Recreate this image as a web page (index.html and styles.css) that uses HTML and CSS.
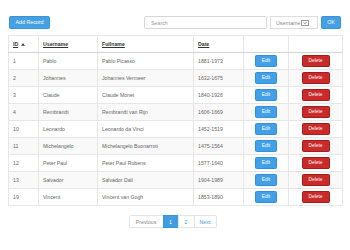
FILE: index.html
```html
<!DOCTYPE html>
<html>
<head>
<meta charset="utf-8">
<link rel="stylesheet" href="styles.css">
</head>
<body>
<div class="page">
  <div class="toolbar">
    <button class="btn btn-blue add">Add Record</button>
    <div class="tools">
      <input class="search" type="text" placeholder="Search">
      <div class="select"><span>Username</span><span class="caret-box"><svg viewBox="0 0 8 6" width="6" height="4"><path d="M1.5 1.5 L4 4 L6.5 1.5" fill="none" stroke="#555" stroke-width="1"/></svg></span></div>
      <button class="btn btn-blue ok">OK</button>
    </div>
  </div>
  <table class="grid">
    <colgroup>
      <col class="c1"><col class="c2"><col class="c3"><col class="c4"><col class="c5"><col class="c6">
    </colgroup>
    <thead>
      <tr>
        <th><a>ID</a> <svg class="sort" viewBox="0 0 6 4" width="4" height="3"><path d="M0 4 L3 0 L6 4 Z" fill="#333"/></svg></th>
        <th><a>Username</a></th>
        <th><a>Fullname</a></th>
        <th><a>Date</a></th>
        <th></th>
        <th></th>
      </tr>
    </thead>
    <tbody>
      <tr><td>1</td><td>Pablo</td><td>Pablo Picasso</td><td>1881-1973</td><td class="act"><button class="btn btn-edit">Edit</button></td><td class="act"><button class="btn btn-del">Delete</button></td></tr>
      <tr><td>2</td><td>Johannes</td><td>Johannes Vermeer</td><td>1632-1675</td><td class="act"><button class="btn btn-edit">Edit</button></td><td class="act"><button class="btn btn-del">Delete</button></td></tr>
      <tr><td>3</td><td>Claude</td><td>Claude Monet</td><td>1840-1926</td><td class="act"><button class="btn btn-edit">Edit</button></td><td class="act"><button class="btn btn-del">Delete</button></td></tr>
      <tr><td>4</td><td>Rembrandt</td><td>Rembrandt van Rijn</td><td>1606-1669</td><td class="act"><button class="btn btn-edit">Edit</button></td><td class="act"><button class="btn btn-del">Delete</button></td></tr>
      <tr><td>10</td><td>Leonardo</td><td>Leonardo da Vinci</td><td>1452-1519</td><td class="act"><button class="btn btn-edit">Edit</button></td><td class="act"><button class="btn btn-del">Delete</button></td></tr>
      <tr><td>11</td><td>Michelangelo</td><td>Michelangelo Buonarroti</td><td>1475-1564</td><td class="act"><button class="btn btn-edit">Edit</button></td><td class="act"><button class="btn btn-del">Delete</button></td></tr>
      <tr><td>12</td><td>Peter Paul</td><td>Peter Paul Rubens</td><td>1577-1640</td><td class="act"><button class="btn btn-edit">Edit</button></td><td class="act"><button class="btn btn-del">Delete</button></td></tr>
      <tr><td>13</td><td>Salvador</td><td>Salvador Dalí</td><td>1904-1989</td><td class="act"><button class="btn btn-edit">Edit</button></td><td class="act"><button class="btn btn-del">Delete</button></td></tr>
      <tr><td>19</td><td>Vincent</td><td>Vincent van Gogh</td><td>1853-1890</td><td class="act"><button class="btn btn-edit">Edit</button></td><td class="act"><button class="btn btn-del">Delete</button></td></tr>
    </tbody>
  </table>
  <nav class="pager">
    <span class="pg prev disabled">Previous</span>
    <span class="pg num active">1</span>
    <span class="pg num two">2</span>
    <span class="pg next">Next</span>
  </nav>
</div>
</body>
</html>
```
FILE: styles.css
```css
html, body {
  margin: 0;
  padding: 0;
  background: #fff;
}
body {
  font-family: "Liberation Sans", Arial, sans-serif;
  color: #555;
}
.page {
  padding: 16px 8px 0 8px;
}
.toolbar {
  display: flex;
  justify-content: space-between;
  align-items: center;
  height: 13px;
  margin-bottom: 6px;
}
.tools {
  display: flex;
  align-items: center;
  gap: 3px;
  margin-right: 1px;
}
.btn {
  font-family: "Liberation Sans", Arial, sans-serif;
  border: 1px solid transparent;
  border-radius: 1.5px;
  color: #fff;
  padding: 0;
  margin: 0;
  box-sizing: border-box;
  display: inline-flex;
  align-items: center;
  justify-content: center;
  line-height: 1;
}
.btn-blue {
  background: #45a1e3;
  border-color: #3a93d6;
  font-size: 5.3px;
  height: 13px;
}
.add {
  width: 41px;
  margin-left: 1px;
}
.ok {
  width: 20px;
}
.search {
  box-sizing: border-box;
  width: 123px;
  height: 13px;
  border: 1px solid #d6d6d6;
  border-radius: 1.5px;
  padding: 0 0 0 6px;
  margin: 0;
  font-family: "Liberation Sans", Arial, sans-serif;
  font-size: 5.3px;
  outline: none;
}
.search::placeholder {
  color: #999;
}
.select {
  box-sizing: border-box;
  width: 48px;
  height: 13px;
  border: 1px solid #ddd;
  display: flex;
  align-items: center;
  padding-left: 5px;
  gap: 1px;
  font-size: 5.3px;
  color: #888;
}
.caret-box {
  box-sizing: border-box;
  width: 8px;
  height: 6px;
  border: 1px solid #999;
  display: flex;
  align-items: center;
  justify-content: center;
}
.caret-box svg {
  display: block;
}
.grid {
  width: 334px;
  table-layout: fixed;
  border-collapse: collapse;
  border: 1px solid #e3e3e3;
  font-size: 5.2px;
}
.c1 { width: 30px; }
.c2 { width: 59px; }
.c3 { width: 96px; }
.c4 { width: 50px; }
.c5 { width: 45px; }
.c6 { width: 54px; }
.grid th, .grid td {
  border: 1px solid #e6e6e6;
  padding: 0 0 0 4px;
  text-align: left;
  vertical-align: middle;
  white-space: nowrap;
  overflow: hidden;
}
.grid th {
  height: 16px;
  color: #333;
  font-weight: bold;
  border-bottom: 1px solid #d4d4d4;
}
.grid th a {
  text-decoration: underline;
}
.sort {
  margin-left: 1px;
  vertical-align: 0;
}
.grid td {
  height: 16px;
  color: #666;
}
.grid tbody tr:nth-child(even) td {
  background: #f9f9f9;
}
.grid td.act {
  text-align: center;
  padding: 0;
}
.btn-edit, .btn-del {
  height: 11.5px;
  font-size: 4.8px;
}
.btn-edit {
  width: 22px;
  background: #42a0e8;
  border-color: #3390d8;
}
.btn-del {
  width: 28px;
  background: #c92a2a;
  border-color: #a31d1d;
}
.pager {
  display: flex;
  justify-content: center;
  margin-top: 9px;
  margin-left: -4px;
}
.pg {
  box-sizing: border-box;
  height: 13px;
  display: flex;
  align-items: center;
  justify-content: center;
  border: 1px solid #e3e3e3;
  margin-left: -1px;
  font-size: 5.3px;
  color: #3a93d6;
  background: #fff;
}
.prev {
  width: 35px;
  border-radius: 1.5px 0 0 1.5px;
}
.num {
  width: 16px;
}
.two {
  width: 17px;
}
.next {
  width: 23px;
  border-radius: 0 1.5px 1.5px 0;
}
.pg.disabled {
  color: #888;
}
.pg.active {
  background: #3f9de2;
  border-color: #3a93d6;
  color: #fff;
}
```
